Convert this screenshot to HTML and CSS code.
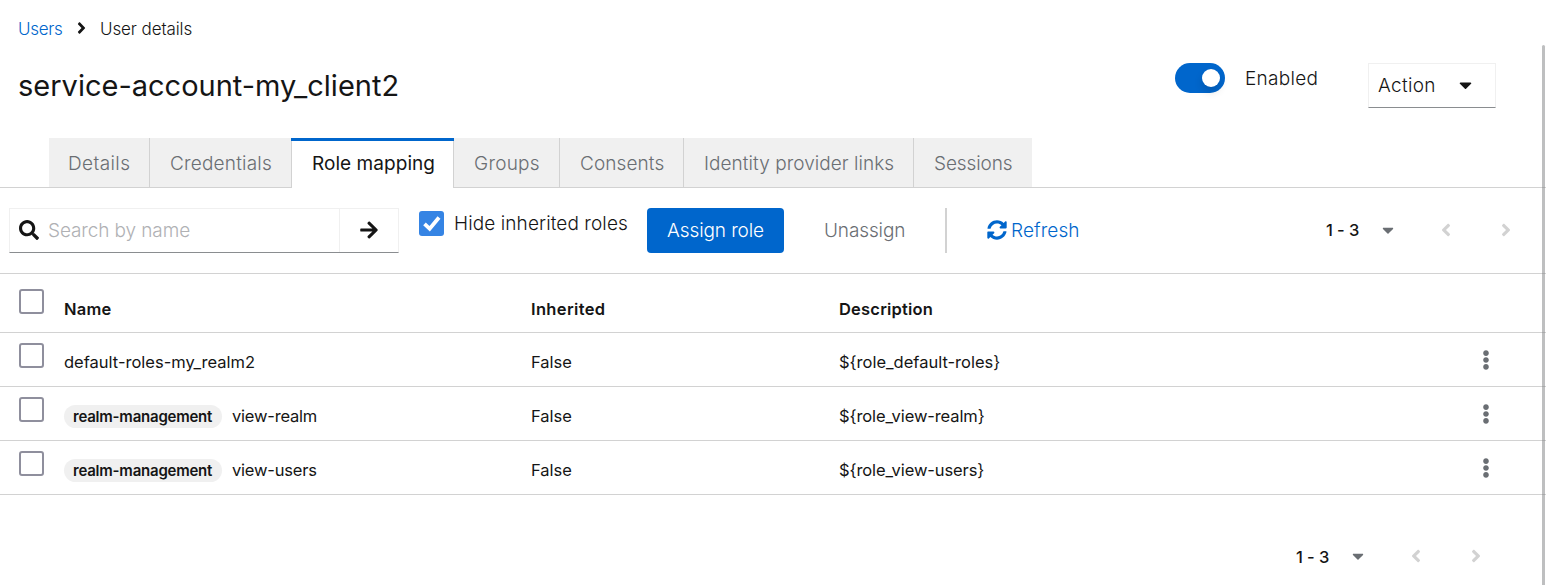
FILE: index.html
```html
<!DOCTYPE html>
<html lang="en">
<head>
<meta charset="utf-8">
<title>User details</title>
<link rel="stylesheet" href="styles.css">
</head>
<body>
<svg class="defs" width="0" height="0" aria-hidden="true">
  <symbol id="angle" viewBox="0 0 256 512"><path d="M224.3 273l-136 136c-9.400 9.400-24.600 9.400-33.900 0l-22.600-22.600c-9.400-9.400-9.400-24.600 0-33.900l96.400-96.400-96.400-96.400c-9.400-9.400-9.400-24.600 0-33.900L54.300 103c9.400-9.400 24.600-9.400 33.900 0l136 136c9.500 9.400 9.500 24.600.1 34z"/></symbol>
  <symbol id="caret" viewBox="0 0 320 512"><path d="M31.300 192h257.300c17.800 0 26.700 21.500 14.100 34.100L174.100 354.800c-7.800 7.800-20.500 7.800-28.300 0L17.200 226.100C4.600 213.500 13.500 192 31.300 192z"/></symbol>
  <symbol id="dots" viewBox="0 0 192 512"><path d="M96 184c39.800 0 72 32.200 72 72s-32.200 72-72 72-72-32.200-72-72 32.200-72 72-72zM24 80c0 39.800 32.200 72 72 72s72-32.200 72-72S135.800 8 96 8 24 40.200 24 80zm0 352c0 39.800 32.200 72 72 72s72-32.200 72-72-32.200-72-72-72-72 32.200-72 72z"/></symbol>
</svg>
<main class="page">
  <nav class="breadcrumb">
    <a class="crumb-link">Users</a>
    <svg class="crumb-icon"><use href="#angle"/></svg>
    <span class="crumb-current">User details</span>
  </nav>
  <header class="header">
    <h1 class="title">service-account-my_client2</h1>
    <div class="switch"><span class="knob"></span></div>
    <span class="enabled">Enabled</span>
    <button class="action"><span>Action</span><svg class="action-caret"><use href="#caret"/></svg></button>
  </header>
  <div class="tabs">
    <div class="tab t-details"><span>Details</span></div>
    <div class="tab t-credentials"><span>Credentials</span></div>
    <div class="tab active"><span>Role mapping</span></div>
    <div class="tab t-groups"><span>Groups</span></div>
    <div class="tab t-consents"><span>Consents</span></div>
    <div class="tab t-links"><span>Identity provider links</span></div>
    <div class="tab t-sessions"><span>Sessions</span></div>
  </div>
  <div class="toolbar">
    <div class="search">
      <div class="search-field">
        <svg class="search-icon" viewBox="0 0 512 512"><path d="M505 442.700L405.300 343c-4.500-4.500-10.600-7-17-7H372c27.600-35.300 44-79.700 44-128C416 93.100 322.900 0 208 0S0 93.100 0 208s93.100 208 208 208c48.300 0 92.700-16.400 128-44v16.300c0 6.400 2.500 12.500 7 17l99.700 99.700c9.400 9.400 24.600 9.400 33.900 0l28.300-28.300c9.400-9.400 9.400-24.600.1-34zM208 336c-70.700 0-128-57.200-128-128 0-70.700 57.200-128 128-128 70.700 0 128 57.200 128 128 0 70.700-57.200 128-128 128z"/></svg>
        <span class="placeholder">Search by name</span>
      </div>
      <div class="search-go">
        <svg class="arrow" viewBox="0 0 448 512"><path d="M190.500 66.900l22.200-22.200c9.400-9.400 24.600-9.400 33.900 0L441 239c9.400 9.400 9.400 24.600 0 33.900L246.600 467.300c-9.400 9.400-24.600 9.400-33.900 0l-22.200-22.200c-9.500-9.500-9.300-25 .4-34.300L311.400 296H24c-13.300 0-24-10.700-24-24v-32c0-13.300 10.700-24 24-24h287.400L190.900 101.200c-9.800-9.300-10-24.800-.4-34.300z"/></svg>
      </div>
    </div>
    <span class="check checked"><svg class="tick" viewBox="0 0 25 25"><path d="M5.500 12.800l5.200 5L20 6.500"/></svg></span>
    <span class="hide-label">Hide inherited roles</span>
    <button class="assign"><span>Assign role</span></button>
    <span class="unassign">Unassign</span>
    <span class="divider"></span>
    <a class="refresh"><svg class="sync" viewBox="0 0 512 512"><path d="M370.700 133.300C339.500 104 298.900 88 255.800 88c-77.500.1-144.300 53.200-162.800 126.900-1.300 5.400-6.100 9.100-11.700 9.100H24.100c-7.500 0-13.200-6.800-11.800-14.200C33.900 94.900 134.800 8 256 8c66.400 0 126.800 26.100 171.300 68.700L463 41C478.100 25.900 504 36.600 504 57.900V192c0 13.300-10.700 24-24 24H345.900c-21.400 0-32.100-25.900-17-41l41.800-41.700zM32 296h134.100c21.400 0 32.100 25.900 17 41l-41.800 41.800c31.300 29.300 71.800 45.300 114.900 45.300 77.400-.1 144.300-53.100 162.800-126.800 1.300-5.400 6.100-9.100 11.700-9.100h57.300c7.500 0 13.200 6.800 11.800 14.200C478.100 417.100 377.200 504 256 504c-66.400 0-126.800-26.100-171.300-68.700L49 471C33.900 486.100 8 475.400 8 454.100V320c0-13.300 10.700-24 24-24z"/></svg><span>Refresh</span></a>
    <div class="pager">
      <b>1 - 3</b><svg class="pager-caret"><use href="#caret"/></svg>
      <svg class="prev"><use href="#angle"/></svg><svg class="next"><use href="#angle"/></svg>
    </div>
  </div>
  <div class="table">
    <div class="row head"><span class="check"></span><b class="h-name">Name</b><b class="h-inherited">Inherited</b><b class="h-desc">Description</b></div>
    <div class="row"><span class="check"></span><span class="cell c-default">default-roles-my_realm2</span><span class="cell">False</span><span class="cell d-default">${role_default-roles}</span><svg class="kebab"><use href="#dots"/></svg></div>
    <div class="row"><span class="check"></span><span class="cell"><i class="badge">realm-management</i><span class="role">view-realm</span></span><span class="cell">False</span><span class="cell desc">${role_view-realm}</span><svg class="kebab"><use href="#dots"/></svg></div>
    <div class="row"><span class="check"></span><span class="cell"><i class="badge">realm-management</i><span class="role">view-users</span></span><span class="cell">False</span><span class="cell desc">${role_view-users}</span><svg class="kebab"><use href="#dots"/></svg></div>
  </div>
  <div class="footer">
    <div class="pager">
      <b>1 - 3</b><svg class="pager-caret"><use href="#caret"/></svg>
      <svg class="prev"><use href="#angle"/></svg><svg class="next"><use href="#angle"/></svg>
    </div>
  </div>
  <div class="scrollbar"></div>
</main>
</body>
</html>
```
FILE: styles.css
```css
* { box-sizing: border-box; }
body { margin: 0; background: #fff; color: #151515; font-family: Inter, "Open Sans", sans-serif; font-size: 19px; font-weight: 300; }
svg { display: block; fill: currentColor; flex: none; }
.defs { position: absolute; }
button { font: inherit; color: inherit; border: 0; padding: 0; background: none; }
.page { position: relative; width: 1546px; height: 585px; overflow: hidden; white-space: nowrap; }
.breadcrumb { display: flex; align-items: center; height: 57px; padding-left: 18px; font-size: 17px; letter-spacing: -0.1px; }
.crumb-link { color: #06c; width: 59px; letter-spacing: -0.3px; }
.crumb-icon { width: 9px; height: 18px; margin: -2px 14px 0 0; }
.header { display: flex; align-items: flex-start; height: 81px; padding-left: 18px; }
.title { margin: 10px 0 0; width: 1157px; font-size: 29px; line-height: 38px; font-weight: 400; }
.switch { width: 50px; height: 30px; margin-top: 6px; border-radius: 15px; background: #06c; padding: 6px 5px; display: flex; justify-content: flex-end; }
.knob { width: 18px; height: 18px; border-radius: 50%; background: #fff; box-shadow: 0 5px 8px rgba(0,0,0,.14); }
.enabled { width: 123px; margin-left: 20px; margin-top: 6px; line-height: 32px; letter-spacing: 0.3px; }
.action { width: 128px; height: 45px; margin-top: 6px; padding-left: 9px; display: flex; align-items: center; border: 1px solid #f0f0f0; border-bottom-color: #8a8d90; }
.action span { width: 81px; text-align: left; letter-spacing: 0.3px; }
.action-caret { width: 13px; height: 20px; margin-top: -1px; }
.tabs { display: flex; height: 50px; padding-left: 49px; border-bottom: 1px solid #d2d2d2; }
.tab { height: 49px; line-height: 51px; padding-left: 19px; background: #f0f0f0; color: #6a6e73; border-right: 1px solid #d2d2d2; }
.t-details { width: 101px; letter-spacing: 0.4px; }
.t-credentials { width: 142px; padding-left: 20px; letter-spacing: 0.2px; border-right-color: #d2d2d2; }
.active { width: 163px; height: 50px; margin-left: -1px; padding-left: 20px; color: #151515; background: #fff; font-weight: 400; border-left: 1px solid #d2d2d2; border-image: linear-gradient(#06c 3px, #d2d2d2 3px) 0 1; }
.active { background: #fff linear-gradient(#06c, #06c) 0 0 / 100% 3px no-repeat; letter-spacing: 0.05px; }
.t-groups { width: 106px; padding-left: 20px; letter-spacing: 0.25px; }
.t-consents { width: 124px; padding-left: 20px; letter-spacing: 0.1px; }
.t-links { width: 230px; padding-left: 20px; letter-spacing: 0.05px; }
.t-sessions { width: 118px; padding-left: 20px; border-right: 0; letter-spacing: -0.1px; }
.toolbar { display: flex; height: 86px; padding: 20px 0 0 9px; border-bottom: 1px solid #d2d2d2; line-height: 45px; }
.search { display: flex; width: 390px; height: 45px; border: 1px solid #f0f0f0; border-bottom-color: #8a8d90; }
.search-field { display: flex; align-items: center; width: 330px; padding-left: 9px; border-right: 1px solid #f0f0f0; }
.search-icon { width: 20px; height: 20px; margin: -1px 9px 0 0; }
.placeholder { color: #b0b1b4; letter-spacing: -0.1px; }
.search-go { display: flex; align-items: center; padding-left: 20px; }
.arrow { width: 18px; height: 20px; margin-top: -1px; }
.check { display: block; flex: none; width: 25px; height: 25px; border: 2px solid #8f8f9d; border-radius: 3px; }
.checked { margin: 3px 10px 0 20px; border: 0; background: #3584e4; }
.tick { width: 25px; height: 25px; fill: none; stroke: #fff; stroke-width: 3.8; }
.hide-label { width: 193px; line-height: 32px; letter-spacing: 0.1px; }
.assign { width: 137px; height: 45px; border-radius: 4px; background: #06c; color: #fff; text-align: center; letter-spacing: -0.1px; }
.unassign { width: 122px; padding-left: 40px; margin-right: 39px; color: #6a6e73; letter-spacing: -0.12px; }
.divider { width: 2px; height: 45px; background: #d2d2d2; }
.refresh { display: flex; align-items: center; height: 45px; margin-left: 40px; color: #06c; letter-spacing: 0.1px; }
.sync { width: 20px; height: 20px; margin: -1px 4px 0 0; }
.pager { display: flex; align-items: center; height: 45px; width: 220px; margin-left: auto; font-size: 16.5px; }
.pager b { width: 56px; font-weight: 500; letter-spacing: -0.1px; }
.pager-caret { width: 12px; height: 18px; color: #6a6e73; margin: -2px 47px 0 0; }
.prev, .next { width: 10px; height: 20px; color: #d2d2d2; margin-top: -2px; }
.prev { transform: rotate(180deg); margin-right: 50px; }
.table { font-size: 16.5px; font-weight: 400; }
.row { display: grid; grid-template-columns: 45px 467px 308px 643px auto; height: 54px; padding-left: 19px; padding-top: 10px; border-bottom: 1px solid #d2d2d2; line-height: 38px; }
.head { height: 59px; padding-top: 15px; line-height: 40px; }
.head b { font-weight: 600; }
.h-name { letter-spacing: 0.2px; }
.h-inherited { letter-spacing: 0.35px; }
.h-desc { letter-spacing: 0.2px; }
.role { letter-spacing: -0.2px; }
.desc { letter-spacing: -0.1px; }
.badge { display: inline-block; font-style: normal; font-weight: 600; font-size: 15px; line-height: 23px; height: 23px; width: 158px; padding-left: 9px; margin-right: 10px; border-radius: 12px; background: #f0f0f0; letter-spacing: -0.22px; }
.kebab { width: 8px; height: 20px; margin-top: 7px; color: #6a6e73; }
.footer { display: flex; padding: 39px 30px 0 0; }
.scrollbar { position: absolute; left: 1542px; top: 45px; width: 3px; height: 545px; border-radius: 2px 2px 0 0; background: rgba(130,132,134,.52); }
```
